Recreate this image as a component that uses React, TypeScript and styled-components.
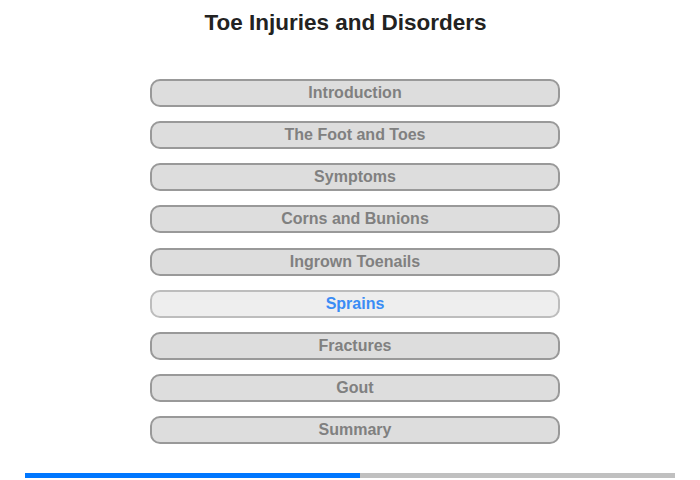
import React from "react";
import styled, { createGlobalStyle } from "styled-components";

const Global = createGlobalStyle`
  html, body { margin: 0; padding: 0; background: #fff; }
  body { font-family: "Liberation Sans", Arial, sans-serif; }
`;

const Page = styled.div`
  width: 700px;
  height: 480px;
  display: flex;
  flex-direction: column;
`;

const Title = styled.h1`
  margin: 0;
  padding: 10px 9px 0 0;
  font-size: 22.5px;
  line-height: 26px;
  font-weight: bold;
  color: #222;
  text-align: center;
`;

const Menu = styled.div`
  display: flex;
  flex-direction: column;
  gap: 14.125px;
  width: 410px;
  margin: 43px 0 0 150px;
`;

const Item = styled.div<{ $active?: boolean }>`
  box-sizing: border-box;
  height: 28px;
  flex: none;
  border: 2px solid ${(p) => (p.$active ? "#bdbdbd" : "#999")};
  border-radius: 10px;
  background: ${(p) => (p.$active ? "#eeeeee" : "#dddddd")};
  color: ${(p) => (p.$active ? "#3a8cf5" : "#808080")};
  font-size: 16px;
  font-weight: bold;
  line-height: 24px;
  text-align: center;
`;

const Progress = styled.div`
  margin: 29px 25px 0 25px;
  height: 5px;
  background: #c0c0c0;
`;

const Fill = styled.div`
  height: 100%;
  background: #0077ff;
`;

const items = [
  "Introduction",
  "The Foot and Toes",
  "Symptoms",
  "Corns and Bunions",
  "Ingrown Toenails",
  "Sprains",
  "Fractures",
  "Gout",
  "Summary",
];

export default function App() {
  return (
    <Page>
      <Global />
      <Title>Toe Injuries and Disorders</Title>
      <Menu>
        {items.map((t) => (
          <Item key={t} $active={t === "Sprains"}>
            {t}
          </Item>
        ))}
      </Menu>
      <Progress>
        <Fill style={{ width: `${(335 / 650) * 100}%` }} />
      </Progress>
    </Page>
  );
}
